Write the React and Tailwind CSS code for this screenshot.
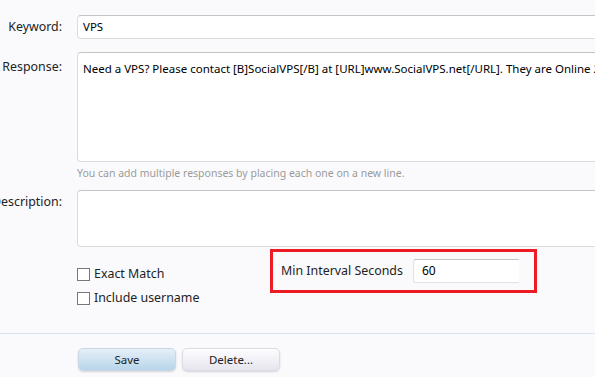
import React from 'react';

const font = { fontFamily: '"Noto Sans", "Open Sans", sans-serif' };

const Label = ({ children, className = '' }) => (
  <div className={`w-[62px] shrink-0 flex justify-end whitespace-nowrap text-[12.4px] text-[#222] ${className}`}>
    {children}
  </div>
);

const Checkbox = ({ label }) => (
  <label className="flex items-center gap-[4px] h-[24px] text-[12.4px] text-[#222]">
    <span className="w-[13px] h-[13px] border border-[#777] bg-white shrink-0"></span>
    {label}
  </label>
);

export default function App() {
  return (
    <div className="w-[595px] h-[377px] overflow-hidden bg-[#fafafd] pt-[15px]" style={font}>
      {/* Keyword */}
      <div className="flex gap-[15px]">
        <Label className="pt-[3px]">Keyword:</Label>
        <div className="w-[540px] shrink-0 h-[24px] bg-white rounded-[4px] border border-[#dcdcdc] border-t-[#c4c4c4] px-[5px] flex items-center text-[11.5px] text-black">
          VPS
        </div>
      </div>

      {/* Response */}
      <div className="flex gap-[15px] mt-[13px]">
        <Label className="pt-[6px]">Response:</Label>
        <div className="w-[540px] shrink-0">
          <div className="h-[110px] bg-white rounded-[4px] border border-[#dcdcdc] border-t-[#c4c4c4] px-[5px] pt-[7px] text-[11.5px] text-black whitespace-nowrap overflow-hidden">
            Need a VPS? Please contact [B]SocialVPS[/B] at [URL]www.SocialVPS.net[/URL]. They are Online 24/7
          </div>
          <div className="text-[10.5px] text-[#9a9a9a] mt-[4px] h-[16px] whitespace-nowrap">
            You can add multiple responses by placing each one on a new line.
          </div>
        </div>
      </div>

      {/* Description */}
      <div className="flex gap-[15px] mt-[8px]">
        <Label className="pt-[3px]">Description:</Label>
        <div className="w-[540px] shrink-0 h-[57px] bg-white rounded-[4px] border border-[#dcdcdc] border-t-[#c4c4c4]"></div>
      </div>

      {/* Options */}
      <div className="flex pl-[77px] h-[86px]">
        <div className="w-[193px] shrink-0 pt-[15px] flex flex-col">
          <Checkbox label="Exact Match" />
          <Checkbox label="Include username" />
        </div>
        <div className="mt-[2px] h-[44px] w-[267px] border-[3px] border-[#ed1c24] flex items-center pl-[8px]">
          <span className="text-[12.4px] text-[#222] w-[132px] whitespace-nowrap">Min Interval Seconds</span>
          <div className="w-[106px] h-[24px] bg-white rounded-l-[3px] border border-r-0 border-[#e2e2e2] border-t-[#c4c4c4] px-[8px] flex items-center text-[12px] text-black">
            60
          </div>
        </div>
      </div>

      {/* Divider */}
      <div className="h-px bg-[#d7e6f2]"></div>

      {/* Buttons */}
      <div className="flex gap-[6px] pl-[78px] pt-[14px]">
        <button className="w-[98px] h-[23px] rounded-[5px] border border-[#c8d8e6] bg-gradient-to-b from-[#e6eff8] to-[#b8d5ea] shadow-[0_1px_2px_rgba(0,0,0,0.15)] text-[11.5px] text-[#222]">
          Save
        </button>
        <button className="w-[98px] h-[23px] rounded-[5px] border border-[#dcdce6] bg-gradient-to-b from-[#fdfdff] to-[#e6e5ef] shadow-[0_1px_2px_rgba(0,0,0,0.15)] text-[11.5px] text-[#222]">
          Delete...
        </button>
      </div>
    </div>
  );
}
